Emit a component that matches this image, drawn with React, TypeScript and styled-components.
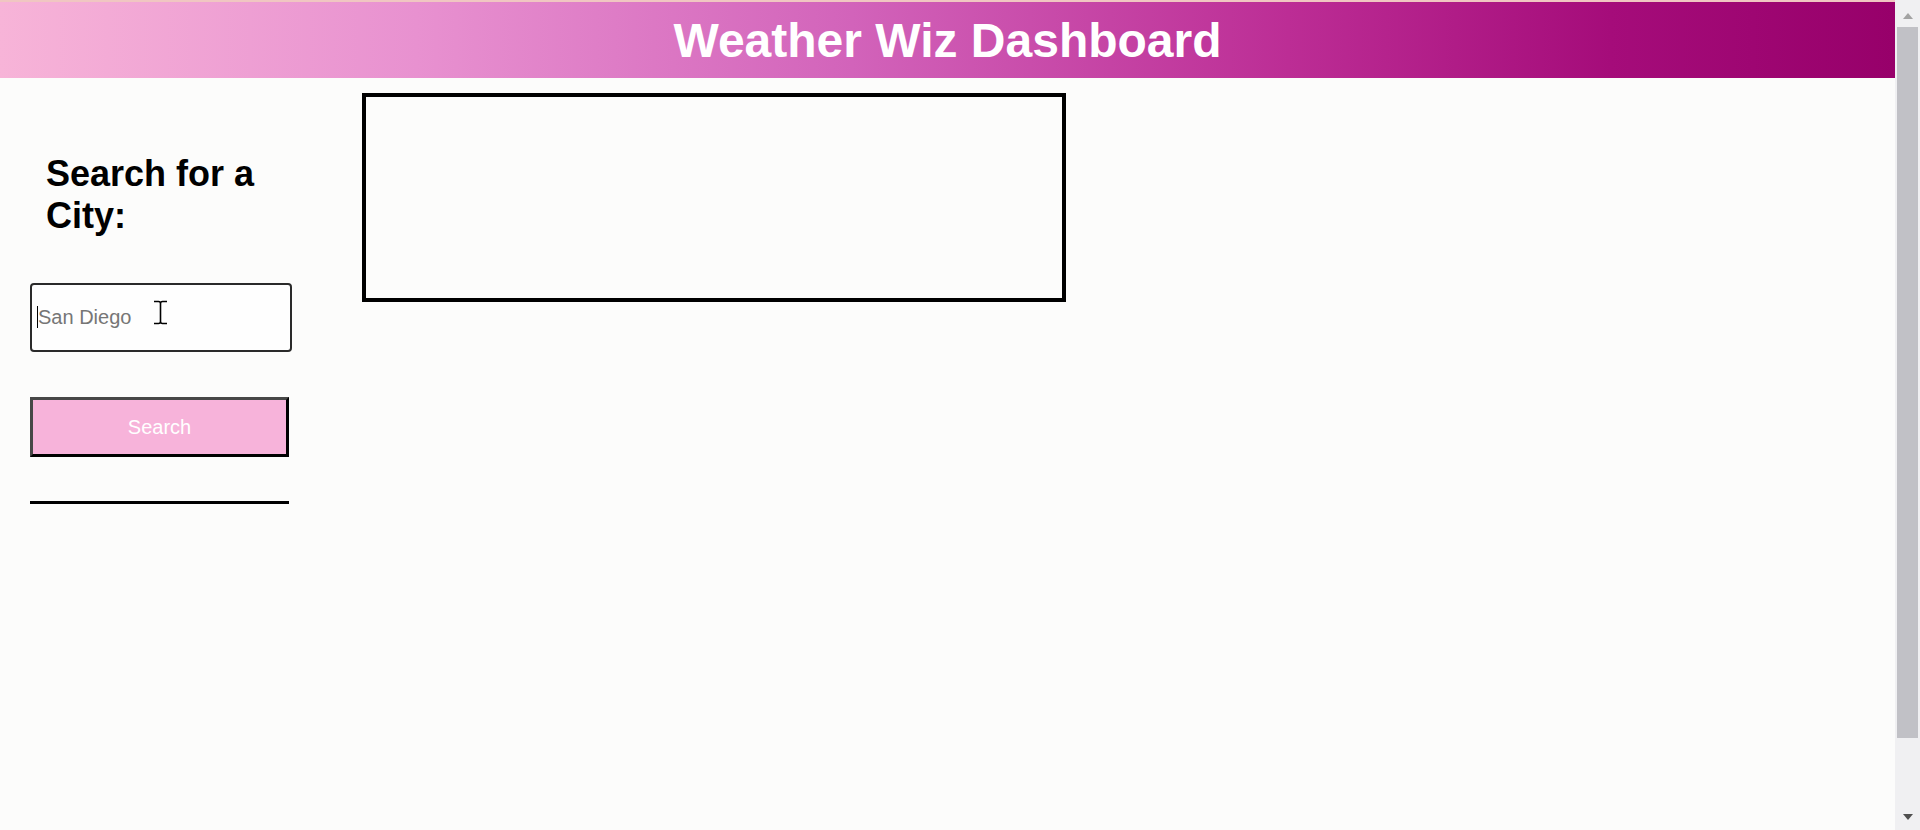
import React from "react";
import styled, { createGlobalStyle } from "styled-components";

const GlobalStyle = createGlobalStyle`
  html, body {
    margin: 0;
    padding: 0;
  }
  body {
    background: #fcfcfb;
    font-family: "Liberation Sans", Arial, Helvetica, sans-serif;
    color: #000;
  }
`;

const Page = styled.div`
  padding-right: 25px;
`;

const Header = styled.header`
  height: 76px;
  border-top: 2px solid #f0c6c2;
  display: flex;
  align-items: center;
  justify-content: center;
  background: linear-gradient(
    to right,
    #f7b4d8 0%,
    #e891d0 22%,
    #d263ba 45%,
    #bc2d95 68%,
    #a50c7a 85%,
    #97006a 100%
  );
`;

const Title = styled.h1`
  margin: 0;
  font-size: 48px;
  font-weight: bold;
  line-height: normal;
  color: #ffffff;
`;

const Main = styled.main`
  display: flex;
  align-items: flex-start;
  min-height: 100vh;
  padding-top: 15px;
  box-sizing: border-box;
`;

const Sidebar = styled.aside`
  width: 262px;
  margin-left: 30px;
  display: flex;
  flex-direction: column;
`;

const SidebarTitle = styled.h2`
  margin: 60px 0 0;
  padding-left: 16px;
  font-size: 36px;
  font-weight: bold;
  line-height: normal;
`;

const InputWrap = styled.div`
  position: relative;
  margin-top: 46px;
`;

const CityInput = styled.input`
  display: block;
  width: 262px;
  height: 69px;
  box-sizing: border-box;
  border: 2px solid #2a2a2a;
  border-radius: 4px;
  padding: 0 6px;
  font-family: "Liberation Sans", Arial, sans-serif;
  font-size: 20px;
  background: #fefefe;
  outline: none;
  &::placeholder {
    color: #767676;
  }
`;

const Caret = styled.span`
  position: absolute;
  left: 7px;
  top: 23px;
  width: 1px;
  height: 22px;
  background: #000;
`;

const PointerIcon = styled.svg`
  position: absolute;
  left: 123px;
  top: 17px;
  width: 15px;
  height: 25px;
  pointer-events: none;
`;

const SearchButton = styled.button`
  margin-top: 45px;
  width: 259px;
  height: 60px;
  box-sizing: border-box;
  border: 3px solid;
  border-color: #474747 #000 #000 #474747;
  background: #f7b3da;
  color: #ffffff;
  font-family: "Liberation Sans", Arial, sans-serif;
  font-size: 20px;
  padding: 0;
`;

const Divider = styled.hr`
  margin: 44px 0 0;
  width: 259px;
  height: 3px;
  border: none;
  background: #000;
`;

const ResultsBox = styled.section`
  margin-left: 70px;
  width: 704px;
  height: 209px;
  box-sizing: border-box;
  border: 4px solid #000;
`;

/* replica of the browser's scrollbar seen at the right edge of the window */
const ScrollRail = styled.div`
  position: fixed;
  top: 0;
  right: 0;
  width: 25px;
  height: 100vh;
  background: #f0f0f2;
  display: flex;
  flex-direction: column;
  align-items: center;
`;

const ScrollArrow = styled.div<{ $down?: boolean }>`
  height: 26px;
  width: 100%;
  display: flex;
  justify-content: center;
  align-items: ${(p) => (p.$down ? "flex-start" : "flex-end")};
  box-sizing: border-box;
  padding: ${(p) => (p.$down ? "10px 0 0" : "0 0 7px")};
  &::before {
    content: "";
    width: 0;
    height: 0;
    border-left: 5px solid transparent;
    border-right: 5px solid transparent;
    ${(p) =>
      p.$down
        ? "border-top: 6px solid #4f4f4f;"
        : "border-bottom: 6px solid #a3a3a3;"}
  }
`;

const ScrollThumb = styled.div`
  margin-top: 1px;
  width: 21px;
  height: 711px;
  background: #c1c1c6;
`;

const ScrollSpacer = styled.div`
  flex: 1;
`;

export default function App() {
  return (
    <Page>
      <GlobalStyle />
      <Header>
        <Title>Weather Wiz Dashboard</Title>
      </Header>
      <Main>
        <Sidebar>
          <SidebarTitle>Search for a City:</SidebarTitle>
          <InputWrap>
            <CityInput type="text" placeholder="San Diego" />
            <Caret />
            <PointerIcon viewBox="0 0 15 25">
              <path
                d="M1 1.5H5.5Q7.5 1.5 7.5 3.5Q7.5 1.5 9.5 1.5H14M7.5 3.5V21.5M1 23.5H5.5Q7.5 23.5 7.5 21.5Q7.5 23.5 9.5 23.5H14"
                fill="none"
                stroke="#fff"
                strokeWidth="3.5"
              />
              <path
                d="M1 1.5H5.5Q7.5 1.5 7.5 3.5Q7.5 1.5 9.5 1.5H14M7.5 3.5V21.5M1 23.5H5.5Q7.5 23.5 7.5 21.5Q7.5 23.5 9.5 23.5H14"
                fill="none"
                stroke="#000"
                strokeWidth="1.6"
              />
            </PointerIcon>
          </InputWrap>
          <SearchButton type="button">Search</SearchButton>
          <Divider />
        </Sidebar>
        <ResultsBox />
      </Main>
      <ScrollRail aria-hidden="true">
        <ScrollArrow />
        <ScrollThumb />
        <ScrollSpacer />
        <ScrollArrow $down />
      </ScrollRail>
    </Page>
  );
}
